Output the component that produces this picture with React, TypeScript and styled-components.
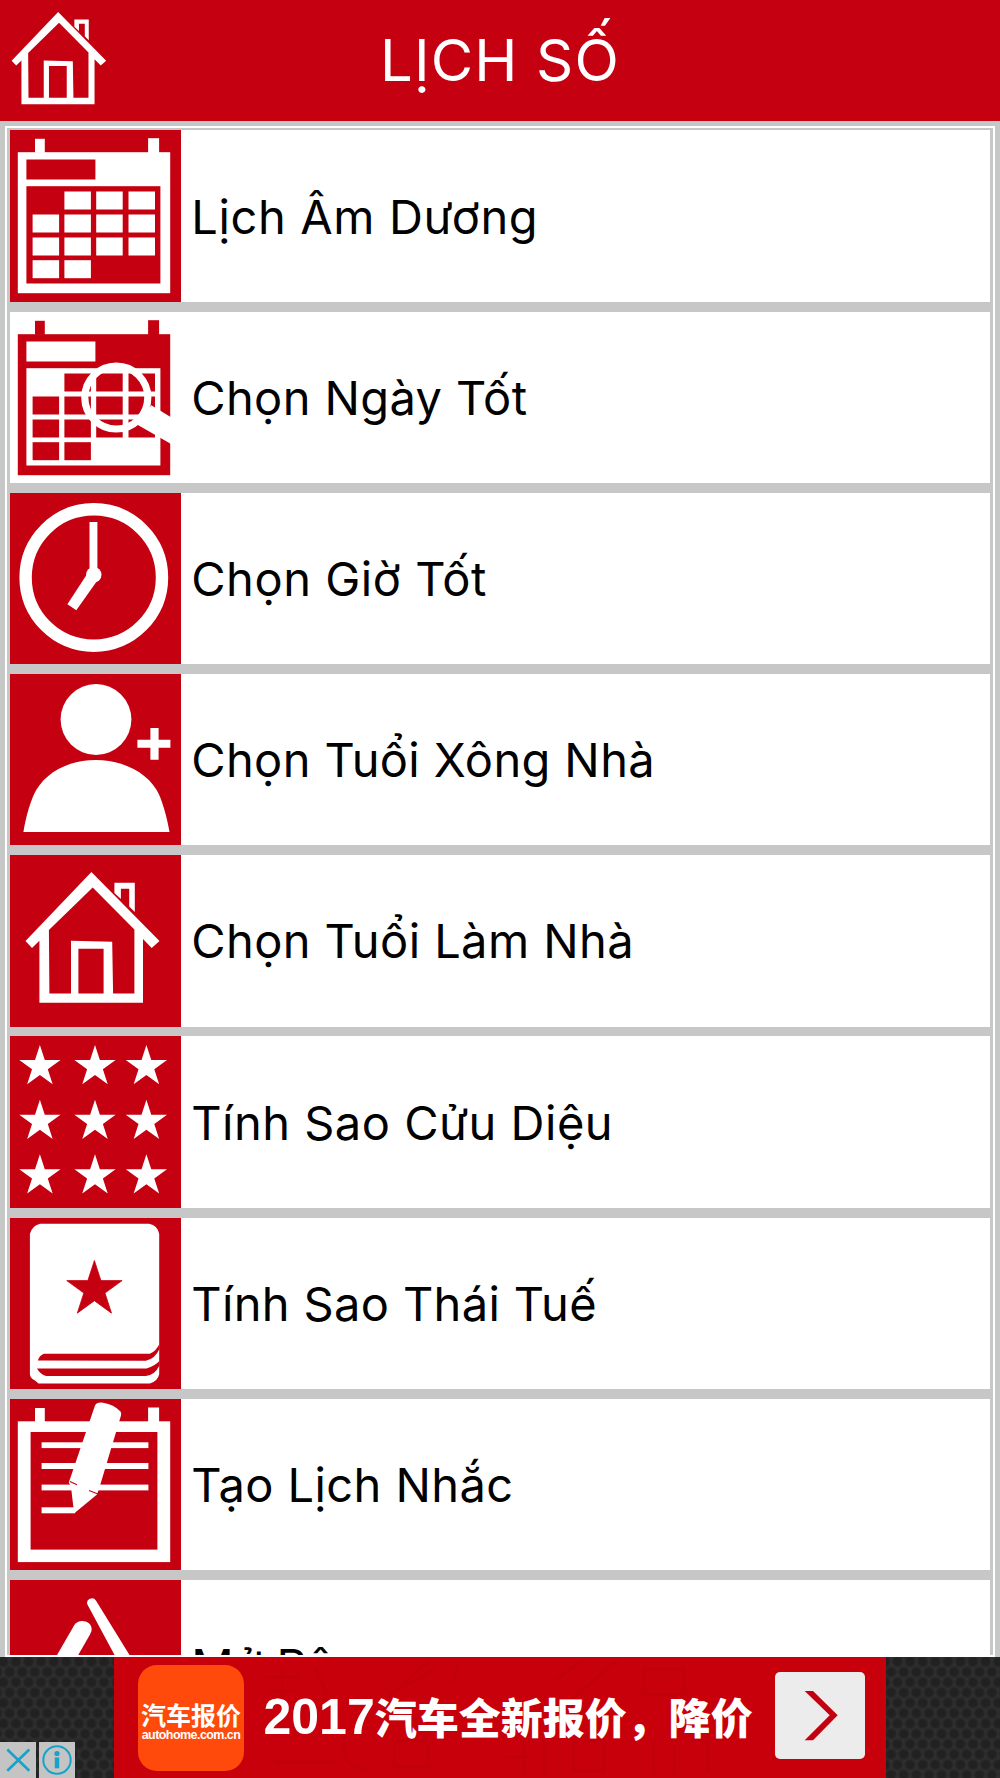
import React from "react";
import styled, { createGlobalStyle } from "styled-components";

const RED = "#c50010";
const GREY = "#c7c7c7";

const GlobalStyle = createGlobalStyle`
  * { box-sizing: border-box; }
  html, body { margin: 0; padding: 0; }
  body { font-family: Inter, "Noto Sans", sans-serif; background: #c5c8c7; overflow: hidden; }
  svg { display: block; }
`;

const Screen = styled.div`
  width: 1000px;
  height: 1778px;
  display: flex;
  flex-direction: column;
  overflow: hidden;
  background: #c5c8c7;
`;

const Header = styled.header`
  flex: none;
  height: 121px;
  display: grid;
  grid-template-columns: 121px 1fr 121px;
  align-items: center;
  background: ${RED};
  color: #fff;
`;

const HomeButton = styled.button`
  width: 121px;
  height: 121px;
  padding: 0;
  border: 0;
  background: transparent;
`;

const Title = styled.h1`
  margin: 0;
  text-align: center;
  font-size: 58px;
  line-height: 121px;
  font-weight: 400;
  letter-spacing: 1.2px;
`;

const Main = styled.main`
  flex: 1;
  min-height: 0;
  display: flex;
  padding: 5px 5px 0;
`;

const Panel = styled.div`
  flex: 1;
  display: flex;
  border: 2px solid #fff;
  background: ${GREY};
  padding: 2.4px 2.7px 0 2.5px;
  overflow: hidden;
`;

const List = styled.ul`
  flex: 1;
  margin: 0;
  padding: 0;
  list-style: none;
  display: flex;
  flex-direction: column;
  gap: 9.7px;
`;

const Row = styled.li`
  flex: none;
  height: 171.5px;
  display: flex;
  align-items: center;
  gap: 10.2px;
  background: #fff;
`;

const Tile = styled.div<{ $light?: boolean }>`
  flex: none;
  width: 171.5px;
  height: 171.5px;
  overflow: hidden;
  background: ${(p) => (p.$light ? "#fff" : RED)};

  svg {
    margin-left: -0.5px;
  }
`;

const Label = styled.span<{ $spacing: number }>`
  padding-top: 1px;
  font-size: 47px;
  line-height: 60px;
  color: #000;
  white-space: nowrap;
  letter-spacing: ${(p) => p.$spacing}px;
`;

const AdBar = styled.footer`
  position: relative;
  flex: none;
  height: 121px;
  display: flex;
  justify-content: center;
  background-color: #303030;
  background-image: radial-gradient(circle, #212121 0 3.5px, rgba(33, 33, 33, 0) 6.5px),
    radial-gradient(circle, #212121 0 3.5px, rgba(33, 33, 33, 0) 6.5px);
  background-size: 12.6px 20.6px;
  background-position: -3px 15px, 3.3px 4.7px;
`;

const Banner = styled.div`
  position: relative;
  width: 772px;
  height: 121px;
  display: flex;
  align-items: center;
  background: #c8000b;
  color: #fff;
`;

const Watermark = styled.svg`
  position: absolute;
  left: 140px;
  top: 0;
`;

const AppBadge = styled.div`
  flex: none;
  width: 106px;
  height: 106px;
  margin-left: 24px;
  padding-top: 7px;
  border-radius: 19px;
  background: #ff4a0b;
  display: flex;
  flex-direction: column;
  align-items: center;
  justify-content: center;
`;

const BadgeName = styled.span`
  font: 700 25px/28px "Noto Sans CJK SC", sans-serif;
  white-space: nowrap;
`;

const BadgeSite = styled.span`
  font: 700 12.5px/15px "Liberation Sans", sans-serif;
  letter-spacing: -0.55px;
  white-space: nowrap;
`;

const Slogan = styled.div`
  position: relative;
  flex: 1;
  padding: 0 0 3px 19.5px;
  display: flex;
  align-items: baseline;
  white-space: nowrap;
  font: 900 42px/60px "Noto Sans CJK SC", sans-serif;
`;

const Year = styled.span`
  font: 700 50px/60px "Liberation Sans", sans-serif;
`;

const GoButton = styled.button`
  flex: none;
  width: 89.4px;
  height: 87px;
  margin: 0 21.3px 4px 0;
  padding: 0;
  border: 0;
  border-radius: 5px;
  background: #ececec;
`;

const AdChoices = styled.div`
  position: absolute;
  left: 0;
  bottom: 0;
  display: flex;
  gap: 3px;
`;

const ChoiceButton = styled.button`
  width: 36px;
  height: 36px;
  padding: 0;
  border: 0;
  background: #c4c4c4;
`;

const Drawing = ({ children, size = 171.5 }: { children: React.ReactNode; size?: number }) => (
  <svg width={size} height={size} viewBox="0 0 171.5 171.5" fill="#fff">
    {children}
  </svg>
);

const star = (cx: number, cy: number, r: number) =>
  Array.from({ length: 10 }, (_, i) => {
    const radius = i % 2 ? r * 0.382 : r;
    const a = (Math.PI / 5) * i - Math.PI / 2;
    return `${(cx + radius * Math.cos(a)).toFixed(2)},${(cy + radius * Math.sin(a)).toFixed(2)}`;
  }).join(" ");

const COLS = [23.6, 55.4, 87.2, 119.5];
const ROWS = [61.5, 84.5, 107.5, 130.2];
const isDay = (r: number, c: number) => !(r === 0 && c === 0) && !(r === 3 && c > 1);

const Calendar = ({ ink = "#fff", paper = RED }: { ink?: string; paper?: string }) => (
  <g fill={ink}>
    <rect x="26" y="8.8" width="9.8" height="14" />
    <rect x="139.1" y="8.2" width="11" height="15" />
    <rect x="8.8" y="22.2" width="152.4" height="141" />
    <rect x="17.4" y="29.5" width="69" height="20" fill={paper} />
    <rect x="17.4" y="56.2" width="134" height="97.3" fill={paper} />
    {ROWS.map((y, r) =>
      COLS.map((x, c) => (isDay(r, c) ? <rect key={`${r}-${c}`} x={x} y={y} width="26.5" height="18" /> : null)),
    )}
  </g>
);

const CalendarIcon = () => (
  <Drawing>
    <Calendar />
  </Drawing>
);

const SearchDayIcon = () => (
  <Drawing>
    <Calendar ink={RED} paper="#fff" />
    <circle cx="107.3" cy="85.5" r="31.5" fill="none" stroke="#fff" strokeWidth="7.2" />
    <path d="M142.3 93.2 L171.5 111 V138 L161.2 131.5 L128 112.5 Z" />
  </Drawing>
);

const ClockIcon = () => (
  <Drawing>
    <circle cx="84.8" cy="84.5" r="68.2" fill="none" stroke="#fff" strokeWidth="12.4" />
    <rect x="80.5" y="29" width="7.9" height="52" />
    <circle cx="84.8" cy="81.8" r="7.7" />
    <path d="M77.8 81.5 L58.4 111.3 L67.3 117.3 L87.3 89 Z" />
  </Drawing>
);

const PersonIcon = () => (
  <Drawing>
    <circle cx="87" cy="45.5" r="35.4" />
    <path d="M14.4 158 C17 142 22 125 27.4 115.8 C38 98 60 86 86.8 86 C113 86 137 98 147.5 115.8 C153 125 158 143 160.5 158 Z" />
    <path d="M141.4 54.1 h8.2 v11.7 h11.8 v8 h-11.8 v12 h-8.2 v-12 h-13 v-8 h13 Z" />
  </Drawing>
);

const HouseIcon = ({ size }: { size?: number }) => (
  <Drawing size={size}>
    <path
      fillRule="evenodd"
      d="M82.4 17 L150.5 86 L142.7 93 L134 84 V147.7 H30.4 V85.7 L23 93 L16.5 86 Z
         M83.7 32.4 L125.4 74.4 V138.4 H104.1 L103.2 86.7 L62 85.7 V138.4 H40.4 L39.9 75 Z
         M69.4 93.7 H94.6 V138.4 H69.4 Z"
    />
    <path d="M105.4 27.7 H125.8 V57 L120.2 51.4 V33.7 H111.9 V44 L105.4 38 Z" />
  </Drawing>
);

const StarsIcon = () => (
  <Drawing>
    {[30.7, 85.5, 140].map((y) =>
      [30.9, 86, 137.4].map((x) => <polygon key={`${x}-${y}`} points={star(x, y, 21.7)} />),
    )}
  </Drawing>
);

const BookIcon = () => (
  <Drawing>
    <path d="M31 5.7 H140 Q149 7.5 150.2 16 V156 Q149 163 141 165.4 H29.5 L26 162.5 Q21 160 20.9 156 V16 Q22.5 8 31 5.7 Z" />
    <g fill={RED}>
      <polygon points={star(85.4, 71.6, 29.1)} stroke={RED} strokeWidth="0.8" strokeLinejoin="round" />
      <path d="M28.9 142.4 Q30 138 34.8 135.7 H140.8 Q147 133.5 150.4 126 V131 Q146 141 136.8 142.7 Z" />
      <path d="M28 150.4 H137.6 Q146 148 150.4 143 V147.5 Q146 157 136.8 158 H37.2 Q31 156 28 150.4 Z" />
    </g>
  </Drawing>
);

const NoteIcon = () => (
  <Drawing>
    <rect x="26" y="9" width="9.8" height="14" />
    <rect x="139.1" y="8.5" width="11" height="15" />
    <rect x="8.8" y="22.3" width="152.4" height="140.8" />
    <rect x="21.6" y="33" width="126.8" height="117.6" fill={RED} />
    <rect x="32.6" y="43.3" width="106.8" height="5.8" />
    <rect x="32.6" y="64" width="106.8" height="6" />
    <rect x="32.6" y="85.6" width="106.8" height="5.8" />
    <rect x="32.6" y="108.3" width="33.6" height="6" />
    <path d="M86 6.5 Q87.5 3 94 3.7 Q105 5.5 111.5 12.5 Q112.7 13.8 112 16.5 L90.9 87 L88 95.6 L66.2 113.6 L64.4 108.3 L61.9 87.3 L59.8 83.5 Z" />
    <path d="M60.9 82.6 L68 85.7 M80 91.5 L89 95" stroke={RED} strokeWidth="1.1" />
  </Drawing>
);

const ToolsIcon = () => (
  <Drawing>
    <path d="M78.4 24.5 A4.7 4.7 0 0 1 86.9 20.6 L152 126 H133 Z" />
    <path d="M65.5 44.8 C70 37.5 85 41 82.3 51.5 L81 54.5 L40 126 H18.6 Z" />
  </Drawing>
);

const items = [
  { label: "Lịch Âm Dương", icon: <CalendarIcon />, spacing: 0.65 },
  { label: "Chọn Ngày Tốt", icon: <SearchDayIcon />, light: true, spacing: 0.4 },
  { label: "Chọn Giờ Tốt", icon: <ClockIcon />, spacing: 0.55 },
  { label: "Chọn Tuổi Xông Nhà", icon: <PersonIcon />, spacing: 0.38 },
  { label: "Chọn Tuổi Làm Nhà", icon: <HouseIcon />, spacing: 0.42 },
  { label: "Tính Sao Cửu Diệu", icon: <StarsIcon />, spacing: 0.5 },
  { label: "Tính Sao Thái Tuế", icon: <BookIcon />, spacing: 0.36 },
  { label: "Tạo Lịch Nhắc", icon: <NoteIcon />, spacing: 0.42 },
  { label: "Mở Rộng", icon: <ToolsIcon />, spacing: 0.5 },
];

export default function App() {
  return (
    <>
      <GlobalStyle />
      <Screen>
        <Header>
          <HomeButton aria-label="Home">
            <HouseIcon size={121} />
          </HomeButton>
          <Title>LỊCH SỐ</Title>
        </Header>
        <Main>
          <Panel>
            <List>
              {items.map((item) => (
                <Row key={item.label}>
                  <Tile $light={item.light}>{item.icon}</Tile>
                  <Label $spacing={item.spacing}>{item.label}</Label>
                </Row>
              ))}
            </List>
          </Panel>
        </Main>
        <AdBar>
          <Banner>
            <Watermark width="500" height="121" fill="none" stroke="#b90010" strokeWidth="3" opacity="0.4">
              <path d="M10 20h36M28 12v40M14 34h30M60 10q20 30 4 44M135 40L176 2M150 30l30-18M205 4l-6 22M20 105h60M90 80q-4 30 20 32M140 84h34v26h-34zM250 100h24M300 24L330 2M310 50l54-48M390 12h40v26h-40zM270 84v34M290 82v34M320 84h30v30h-30zM400 84v34M420 84v34M436 84h18v30" />
            </Watermark>
            <AppBadge>
              <BadgeName>汽车报价</BadgeName>
              <BadgeSite>autohome.com.cn</BadgeSite>
            </AppBadge>
            <Slogan>
              <Year>2017</Year>
              <span>汽车全新报价，降价</span>
            </Slogan>
            <GoButton aria-label="Open">
              <svg width="89" height="87" fill="#c3000f">
                <path d="M29.7 19 H38 L62.7 43.3 L38 68.3 H29.7 L54.7 43.3 Z" />
              </svg>
            </GoButton>
          </Banner>
          <AdChoices>
            <ChoiceButton aria-label="Close">
              <svg width="36" height="36" stroke="#17a2c9" strokeWidth="2.6">
                <path d="M7.3 7.5 L29.3 28.7 M29.3 7.5 L7.3 28.7" />
              </svg>
            </ChoiceButton>
            <ChoiceButton aria-label="Ad info">
              <svg width="36" height="36" fill="#17a2c9">
                <circle cx="18" cy="18" r="13.7" fill="none" stroke="#17a2c9" strokeWidth="2" />
                <circle cx="18" cy="11.5" r="2.6" />
                <rect x="15.8" y="15.5" width="4.4" height="10.8" />
              </svg>
            </ChoiceButton>
          </AdChoices>
        </AdBar>
      </Screen>
    </>
  );
}
